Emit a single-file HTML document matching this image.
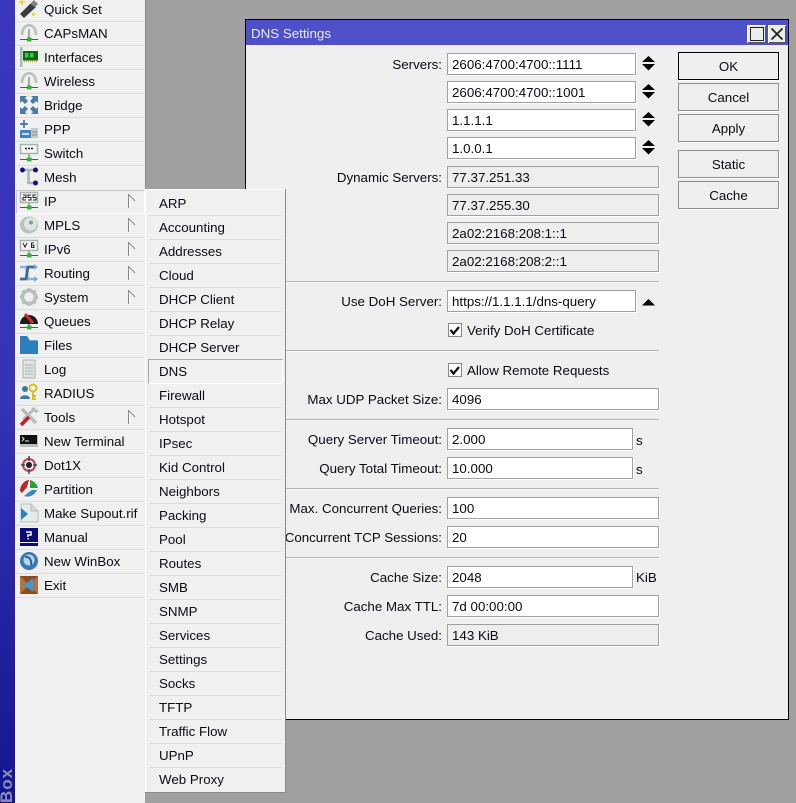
<!DOCTYPE html>
<html><head><meta charset="utf-8"><style>
html,body{margin:0;padding:0;width:796px;height:803px;overflow:hidden;background:#a0a0a0}
body{position:relative;font:13.33px/26px "Liberation Sans",Arial,sans-serif;color:#0a0a14}
div,svg,span{position:absolute}
.nw{white-space:nowrap}
.m{left:44px;height:24px;white-space:nowrap}
.s{left:159px;height:24px;white-space:nowrap}
.ln{left:15px;width:129px;height:1px;background:#dcdcdc}
.sl{left:149px;width:133px;height:1px;background:#dcdcdc}
.ic{left:19px;width:20px;height:20px}
.ar{left:128px;width:8px;height:14px}
.lb{right:354px;height:24px;white-space:nowrap}
.f{left:447px;height:20px;background:#fff;border:1px solid #a0a0a0;box-shadow:1px 1px 0 #fff;line-height:22px;padding-left:4px;box-sizing:content-box;white-space:nowrap}
.ro{background:#eeeeee}
.wl{left:247px;width:412px;height:1px;background:#b4b4b4;box-shadow:0 1px 0 #f8f8f8}
.b{left:678px;width:99px;height:26px;border:1px solid #8e8e8e;box-shadow:1px 1px 0 #fff;text-align:center;line-height:28px;background:#efefef}
.cb{left:448px;width:12px;height:12px;border:1px solid #8a8a8a;background:#fff}
</style></head><body>
<div style="left:0;top:0;width:15px;height:803px;background:linear-gradient(#3c35bd,#3533b6 50%,#14148f)"></div>
<div class="nw" style="left:-2px;top:803px;font:bold 17px/17px 'Liberation Sans',sans-serif;color:#8f8cb8;transform:rotate(-90deg);transform-origin:0 0;letter-spacing:1px">Box</div>
<div style="left:15px;top:0;width:130px;height:803px;background:#f0f0f0"></div>
<div style="left:145px;top:0;width:1px;height:189px;background:#8e8e8e"></div>

<div style="left:16px;top:190px;width:127px;height:22px;border:1px solid;border-color:#c8c8c8 #fff #fff #c8c8c8"></div>

<div class="m" style="top:-3px">Quick Set</div>
<div class="m" style="top:21px">CAPsMAN</div>
<div class="m" style="top:45px">Interfaces</div>
<div class="m" style="top:69px">Wireless</div>
<div class="m" style="top:93px">Bridge</div>
<div class="m" style="top:117px">PPP</div>
<div class="m" style="top:141px">Switch</div>
<div class="m" style="top:165px">Mesh</div>
<div class="m" style="top:189px">IP</div>
<div class="m" style="top:213px">MPLS</div>
<div class="m" style="top:237px">IPv6</div>
<div class="m" style="top:261px">Routing</div>
<div class="m" style="top:285px">System</div>
<div class="m" style="top:309px">Queues</div>
<div class="m" style="top:333px">Files</div>
<div class="m" style="top:357px">Log</div>
<div class="m" style="top:381px">RADIUS</div>
<div class="m" style="top:405px">Tools</div>
<div class="m" style="top:429px">New Terminal</div>
<div class="m" style="top:453px">Dot1X</div>
<div class="m" style="top:477px">Partition</div>
<div class="m" style="top:501px">Make Supout.rif</div>
<div class="m" style="top:525px">Manual</div>
<div class="m" style="top:549px">New WinBox</div>
<div class="m" style="top:573px">Exit</div>

<div class="ln" style="top:21px"></div><div class="ln" style="top:45px"></div><div class="ln" style="top:69px"></div><div class="ln" style="top:93px"></div><div class="ln" style="top:117px"></div><div class="ln" style="top:141px"></div><div class="ln" style="top:165px"></div><div class="ln" style="top:237px"></div><div class="ln" style="top:261px"></div><div class="ln" style="top:285px"></div><div class="ln" style="top:309px"></div><div class="ln" style="top:333px"></div><div class="ln" style="top:357px"></div><div class="ln" style="top:381px"></div><div class="ln" style="top:405px"></div><div class="ln" style="top:429px"></div><div class="ln" style="top:453px"></div><div class="ln" style="top:477px"></div><div class="ln" style="top:501px"></div><div class="ln" style="top:525px"></div><div class="ln" style="top:549px"></div><div class="ln" style="top:573px"></div><div class="ln" style="top:597px"></div>

<!-- arrows -->
<svg class="ar" style="top:194px" viewBox="0 0 8 14"><path d="M.5 .5V13.5L7 7Z" fill="#f4f4f4"/><path d="M.5 0V14M.5 .5L7 7" stroke="#8a8a8a" fill="none"/></svg>
<svg class="ar" style="top:218px" viewBox="0 0 8 14"><path d="M.5 .5V13.5L7 7Z" fill="#f4f4f4"/><path d="M.5 0V14M.5 .5L7 7" stroke="#8a8a8a" fill="none"/></svg>
<svg class="ar" style="top:242px" viewBox="0 0 8 14"><path d="M.5 .5V13.5L7 7Z" fill="#f4f4f4"/><path d="M.5 0V14M.5 .5L7 7" stroke="#8a8a8a" fill="none"/></svg>
<svg class="ar" style="top:266px" viewBox="0 0 8 14"><path d="M.5 .5V13.5L7 7Z" fill="#f4f4f4"/><path d="M.5 0V14M.5 .5L7 7" stroke="#8a8a8a" fill="none"/></svg>
<svg class="ar" style="top:290px" viewBox="0 0 8 14"><path d="M.5 .5V13.5L7 7Z" fill="#f4f4f4"/><path d="M.5 0V14M.5 .5L7 7" stroke="#8a8a8a" fill="none"/></svg>
<svg class="ar" style="top:410px" viewBox="0 0 8 14"><path d="M.5 .5V13.5L7 7Z" fill="#f4f4f4"/><path d="M.5 0V14M.5 .5L7 7" stroke="#8a8a8a" fill="none"/></svg>

<!-- icons -->
<svg class="ic" style="top:-1px" viewBox="0 0 20 20"><path d="M1 15L12 4l5 4L5 19z" fill="#3a3a3a"/><path d="M11 5l4-4 4 4-3 3z" fill="#808080"/><path d="M3 0v6M0 3h6" stroke="#e8d820" stroke-width="1.6"/><rect x="13" y="14" width="3" height="2.500" fill="#e8d820"/></svg>
<svg class="ic" style="top:23px" viewBox="0 0 20 20"><path d="M3 12C3 -1 17 -1 17 12" fill="none" stroke="#b9c5bd" stroke-width="2.800"/><path d="M10 6V15" stroke="#8a9a90" stroke-width="1.6"/><path d="M1 16.5H19" stroke="#555" stroke-width="1"/><rect x="8" y="14.5" width="4.500" height="4" fill="#2fb52f"/></svg>
<svg class="ic" style="top:47px" viewBox="0 0 20 20"><rect x="1" y="0" width="2.500" height="20" fill="#a9b9b1"/><rect x="4" y="4" width="15" height="9.500" fill="#0e6a12"/><rect x="6" y="6" width="3.500" height="4.500" fill="#4cc24c"/><rect x="11" y="6" width="3.500" height="4.500" fill="#4cc24c"/><path d="M5 14.500H19" stroke="#c8b020" stroke-width="1.6" stroke-dasharray="1 1"/></svg>
<svg class="ic" style="top:71px" viewBox="0 0 20 20"><path d="M3 12C3 -1 17 -1 17 12" fill="none" stroke="#b9c5bd" stroke-width="2.800"/><path d="M10 6V15" stroke="#8a9a90" stroke-width="1.6"/><path d="M1 16.5H19" stroke="#555" stroke-width="1"/><rect x="8" y="14.5" width="4.500" height="4" fill="#2fb52f"/></svg>
<svg class="ic" style="top:95px" viewBox="0 0 20 20" fill="#4a7aa6"><path d="M1 1H8L6 3l3 3-3 3-3-3-2 2z"/><path d="M19 1H12l2 2-3 3 3 3 3-3 2 2z"/><path d="M1 19H8L6 17l3-3-3-3-3 3-2-2z"/><path d="M19 19H12l2-2-3-3 3-3 3 3 2-2z"/></svg>
<svg class="ic" style="top:119px" viewBox="0 0 20 20"><path d="M1 5H9M5 1V9" stroke="#3f74a8" stroke-width="1.7"/><rect x="1" y="11" width="11" height="8" fill="#3a86c4"/><rect x="3" y="14" width="7" height="2" fill="#c5dff0"/><rect x="12" y="9" width="7" height="10" fill="#c4c8c6"/><path d="M13 13h5M13 16h5" stroke="#8a908c"/></svg>
<svg class="ic" style="top:143px" viewBox="0 0 20 20"><rect x="1.500" y="1.500" width="17" height="9" fill="#f4f4f4" stroke="#a8b4ac" stroke-width="1.500"/><path d="M6 5.500h2M9 5.500h2M12 5.500h2" stroke="#222" stroke-width="1.500"/><path d="M10 11V16" stroke="#8a9a90" stroke-width="1.500"/><path d="M1 16.500H19" stroke="#555"/><rect x="8" y="14.500" width="4.500" height="4" fill="#2fb52f"/></svg>
<svg class="ic" style="top:167px" viewBox="0 0 20 20"><path d="M3 3H17M9.500 3V16H17" fill="none" stroke="#a9b9b1" stroke-width="2.600"/><circle cx="3.500" cy="3" r="2.500" fill="#101080"/><circle cx="16.500" cy="3" r="2.500" fill="#101080"/><circle cx="16.500" cy="16" r="2.500" fill="#101080"/></svg>
<svg class="ic" style="top:191px" viewBox="0 0 20 20"><rect x="1.500" y="1.500" width="17" height="10" fill="#f4f4f4" stroke="#a8b4ac" stroke-width="1.500"/><path d="M4 4h3v2.500h-3v2.500h3M9 4h3H9v2.500h3v2.500h-3M14 4h3h-3v2.500h3v2.500h-3" fill="none" stroke="#222" stroke-width="1"/><path d="M10 12V16" stroke="#8a9a90" stroke-width="1.500"/><path d="M1 16.500H19" stroke="#555"/><rect x="8" y="14.500" width="4.500" height="4" fill="#2fb52f"/></svg>
<svg class="ic" style="top:215px" viewBox="0 0 20 20"><ellipse cx="10" cy="10" rx="9" ry="8.500" fill="#b7c4bc"/><circle cx="11.500" cy="9" r="6.500" fill="#dfe6e2"/><circle cx="12" cy="7.500" r="2" fill="#8a9a92"/></svg>
<svg class="ic" style="top:239px" viewBox="0 0 20 20"><rect x="1.500" y="1.500" width="17" height="10" fill="#f4f4f4" stroke="#a8b4ac" stroke-width="1.500"/><path d="M4 4l2 4 2-4M15 4h-2.500v4.500H15v-2.300h-2.500" fill="none" stroke="#222"/><path d="M10 12V16" stroke="#8a9a90" stroke-width="1.500"/><path d="M1 16.500H19" stroke="#555"/><rect x="8" y="14.500" width="4.500" height="4" fill="#2fb52f"/></svg>
<svg class="ic" style="top:263px" viewBox="0 0 20 20"><path d="M1 4H7L9 16H15" fill="none" stroke="#8fb8d8" stroke-width="2.500"/><path d="M1 16H7L9 4H15" fill="none" stroke="#3f6d9c" stroke-width="2.800"/><path d="M15 1l4 3-4 3zM15 13l4 3-4 3z" fill="#7fa8cc"/></svg>
<svg class="ic" style="top:287px" viewBox="0 0 20 20"><circle cx="10" cy="10" r="6.500" fill="none" stroke="#b4c0ba" stroke-width="3.500"/><path d="M10 1v3M10 16v3M1 10h3M16 10h3M3.500 3.500l2 2M14.500 14.500l2 2M16.500 3.500l-2 2M5.500 14.500l-2 2" stroke="#b4c0ba" stroke-width="3"/></svg>
<svg class="ic" style="top:311px" viewBox="0 0 20 20"><path d="M1 13A9 9 0 0 1 19 13Z" fill="#1c1c1c"/><path d="M6 3L14 12" stroke="#d8282c" stroke-width="3"/><path d="M10 13V16" stroke="#777" stroke-width="1.500"/><path d="M1 16.500H19" stroke="#555"/><rect x="8" y="14.500" width="4.500" height="4" fill="#2fb52f"/></svg>
<svg class="ic" style="top:335px" viewBox="0 0 20 20"><path d="M1 1H8L11 5H19V19H1Z" fill="#2c7fbc"/><path d="M8 1L11 5H19V6H10Z" fill="#6aa8d8"/></svg>
<svg class="ic" style="top:359px" viewBox="0 0 20 20"><rect x="4" y="1" width="12" height="18" fill="#dfe5e2" stroke="#a9b5af"/><path d="M6 6h8M6 9h8M6 12h8M6 15h8" stroke="#a9b5af"/></svg>
<svg class="ic" style="top:383px" viewBox="0 0 20 20"><circle cx="6" cy="6" r="3" fill="#3d78ac"/><path d="M1 16C1 11 11 11 11 16Z" fill="#3d78ac"/><circle cx="14" cy="5" r="3.500" fill="none" stroke="#d8c020" stroke-width="2"/><path d="M14 8.500V17M14 13h3M14 16h3" stroke="#d8c020" stroke-width="2"/></svg>
<svg class="ic" style="top:407px" viewBox="0 0 20 20"><path d="M3 2L17 16" stroke="#b4beb9" stroke-width="3.500"/><path d="M16 1L4 13" stroke="#b4beb9" stroke-width="3"/><path d="M10 10L2 18" stroke="#c2202a" stroke-width="3.500"/><path d="M13 1l4 4 2-2" stroke="#b4beb9" stroke-width="2" fill="none"/></svg>
<svg class="ic" style="top:431px" viewBox="0 0 20 20"><rect x="1" y="4" width="18" height="12" fill="#b9bdbb"/><rect x="1" y="4" width="17" height="9" fill="#111"/><path d="M3 6l2 2-2 2M6 10h4" stroke="#eee" fill="none"/></svg>
<svg class="ic" style="top:455px" viewBox="0 0 20 20"><circle cx="10" cy="10" r="6" fill="none" stroke="#c8404c" stroke-width="2"/><path d="M10 1V6M10 14V19M2 10H6M14 10H18" stroke="#444" stroke-width="1.500"/><circle cx="10" cy="10" r="3" fill="#222"/></svg>
<svg class="ic" style="top:479px" viewBox="0 0 20 20"><path d="M1 12C1 6 6 1 10 1L8 8 3 14Z" fill="#c0222a"/><path d="M11 1C15 2 18 5 19 9H11Z" fill="#2aa23a"/><path d="M18 11C16 16 10 19 5 17L10 13 13 11Z" fill="#3a88c8"/></svg>
<svg class="ic" style="top:503px" viewBox="0 0 20 20"><path d="M2 1H12L19 8V19H2Z" fill="#e4ebe8" stroke="#b4c0ba"/><path d="M12 1V8H19" fill="#cfd8d4" stroke="#b4c0ba"/><path d="M2 5L9 11 2 17Z" fill="#2c7fbc"/></svg>
<svg class="ic" style="top:527px" viewBox="0 0 20 20"><rect x="1" y="1" width="18" height="18" fill="#0a0a78"/><path d="M7 5h5v3H9v2" fill="none" stroke="#fff" stroke-width="1.500"/><rect x="8.500" y="11" width="1.500" height="1.500" fill="#fff"/><path d="M1 15.500H19" stroke="#f0f0f0"/></svg>
<svg class="ic" style="top:551px" viewBox="0 0 20 20"><circle cx="10" cy="10" r="9" fill="#3a78b4"/><circle cx="10" cy="9" r="5.500" fill="#b8d4ec"/><path d="M6 6C10 5 13 9 12 14" fill="none" stroke="#2c5f98" stroke-width="2"/></svg>
<svg class="ic" style="top:575px" viewBox="0 0 20 20"><rect x="1" y="1" width="18" height="18" fill="#8a4a22"/><path d="M1 1L8 8V12L1 19ZM19 1L13 6V14L19 19Z" fill="#b4723c"/><path d="M5 10L14 3V17Z" fill="#3a9ad8"/></svg>

<!-- window -->
<div style="left:245px;top:19px;width:544px;height:701px;background:#000"></div>
<div style="left:246px;top:20px;width:542px;height:699px;background:#efefef"></div>
<div style="left:246px;top:20px;width:542px;height:25px;background:#4d50c9"></div>
<div class="nw" style="left:251px;top:21px;color:#eaeaff">DNS Settings</div>
<div style="left:747px;top:25px;width:19px;height:18px;background:#ececec;box-shadow:inset 1px 1px 0 #fff,inset -1px -1px 0 #555"></div>
<div style="left:750px;top:27px;width:12px;height:12px;border:1px solid #222"></div>
<div style="left:768px;top:25px;width:18px;height:18px;background:#ececec;box-shadow:inset 1px 1px 0 #fff,inset -1px -1px 0 #555"></div>
<svg style="left:771px;top:28px;width:12px;height:12px" viewBox="0 0 12 12"><path d="M.5 .5L11.500 11.500M11.500 .5L.5 11.500" stroke="#222" stroke-width="1.800"/></svg>

<div class="lb" style="top:52px">Servers:</div>
<div class="f" style="top:53px;width:183px">2606:4700:4700::1111</div>
<div class="f" style="top:81px;width:183px">2606:4700:4700::1001</div>
<div class="f" style="top:109px;width:183px">1.1.1.1</div>
<div class="f" style="top:137px;width:183px">1.0.0.1</div>
<svg style="left:642px;top:56px;width:13px;height:15px" viewBox="0 0 13 15"><path d="M6.500 0L13 6H0ZM0 8H13L6.500 14.500Z"/></svg>
<svg style="left:642px;top:84px;width:13px;height:15px" viewBox="0 0 13 15"><path d="M6.500 0L13 6H0ZM0 8H13L6.500 14.500Z"/></svg>
<svg style="left:642px;top:112px;width:13px;height:15px" viewBox="0 0 13 15"><path d="M6.500 0L13 6H0ZM0 8H13L6.500 14.500Z"/></svg>
<svg style="left:642px;top:140px;width:13px;height:15px" viewBox="0 0 13 15"><path d="M6.500 0L13 6H0ZM0 8H13L6.500 14.500Z"/></svg>

<div class="lb" style="top:165px">Dynamic Servers:</div>
<div class="f ro" style="top:166px;width:206px">77.37.251.33</div>
<div class="f ro" style="top:194px;width:206px">77.37.255.30</div>
<div class="f ro" style="top:222px;width:206px">2a02:2168:208:1::1</div>
<div class="f ro" style="top:250px;width:206px">2a02:2168:208:2::1</div>

<div class="wl" style="top:281px"></div>
<div class="lb" style="top:289px">Use DoH Server:</div>
<div class="f" style="top:290px;width:183px">https://1.1.1.1/dns-query</div>
<svg style="left:642px;top:299px;width:13px;height:7px" viewBox="0 0 13 7"><path d="M6.500 0L13 6.500H0Z"/></svg>
<div class="cb" style="top:323px"></div>
<svg style="left:449px;top:325px;width:12px;height:11px" viewBox="0 0 12 11"><path d="M1.500 5L4.500 8.500L10 2" fill="none" stroke="#111" stroke-width="2.200"/></svg>
<div class="nw" style="left:467px;top:318px">Verify DoH Certificate</div>

<div class="wl" style="top:350px"></div>
<div class="cb" style="top:363px"></div>
<svg style="left:449px;top:365px;width:12px;height:11px" viewBox="0 0 12 11"><path d="M1.500 5L4.500 8.500L10 2" fill="none" stroke="#111" stroke-width="2.200"/></svg>
<div class="nw" style="left:467px;top:358px">Allow Remote Requests</div>
<div class="lb" style="top:387px">Max UDP Packet Size:</div>
<div class="f" style="top:388px;width:206px">4096</div>

<div class="wl" style="top:419px"></div>
<div class="lb" style="top:427px">Query Server Timeout:</div>
<div class="f" style="top:428px;width:180px">2.000</div>
<div class="nw" style="left:636px;top:428px">s</div>
<div class="lb" style="top:456px">Query Total Timeout:</div>
<div class="f" style="top:457px;width:180px">10.000</div>
<div class="nw" style="left:636px;top:457px">s</div>

<div class="wl" style="top:488px"></div>
<div class="lb" style="top:496px">Max. Concurrent Queries:</div>
<div class="f" style="top:497px;width:206px">100</div>
<div class="lb" style="top:525px">Max. Concurrent TCP Sessions:</div>
<div class="f" style="top:526px;width:206px">20</div>

<div class="wl" style="top:557px"></div>
<div class="lb" style="top:565px">Cache Size:</div>
<div class="f" style="top:566px;width:180px">2048</div>
<div class="nw" style="left:636px;top:565px">KiB</div>
<div class="lb" style="top:594px">Cache Max TTL:</div>
<div class="f" style="top:595px;width:206px">7d 00:00:00</div>
<div class="lb" style="top:623px">Cache Used:</div>
<div class="f ro" style="top:624px;width:206px">143 KiB</div>

<div class="b" style="top:52px;border-color:#000">OK</div>
<div class="b" style="top:83px">Cancel</div>
<div class="b" style="top:114px">Apply</div>
<div class="b" style="top:150px">Static</div>
<div class="b" style="top:181px">Cache</div>

<!-- submenu -->
<div style="left:145px;top:189px;width:141px;height:604px;background:#8a8a8a"></div>
<div style="left:145px;top:189px;width:139px;height:602px;background:#f0f0f0;border-top:1px solid #fff;border-left:1px solid #fff"></div>
<div style="left:148px;top:359px;width:133px;height:23px;border:1px solid;border-color:#a8a8a8 #fff #fff #a8a8a8"></div>

<div class="s" style="top:191px">ARP</div>
<div class="s" style="top:215px">Accounting</div>
<div class="s" style="top:239px">Addresses</div>
<div class="s" style="top:263px">Cloud</div>
<div class="s" style="top:287px">DHCP Client</div>
<div class="s" style="top:311px">DHCP Relay</div>
<div class="s" style="top:335px">DHCP Server</div>
<div class="s" style="top:359px">DNS</div>
<div class="s" style="top:383px">Firewall</div>
<div class="s" style="top:407px">Hotspot</div>
<div class="s" style="top:431px">IPsec</div>
<div class="s" style="top:455px">Kid Control</div>
<div class="s" style="top:479px">Neighbors</div>
<div class="s" style="top:503px">Packing</div>
<div class="s" style="top:527px">Pool</div>
<div class="s" style="top:551px">Routes</div>
<div class="s" style="top:575px">SMB</div>
<div class="s" style="top:599px">SNMP</div>
<div class="s" style="top:623px">Services</div>
<div class="s" style="top:647px">Settings</div>
<div class="s" style="top:671px">Socks</div>
<div class="s" style="top:695px">TFTP</div>
<div class="s" style="top:719px">Traffic Flow</div>
<div class="s" style="top:743px">UPnP</div>
<div class="s" style="top:767px">Web Proxy</div>

<div class="sl" style="top:215px"></div><div class="sl" style="top:239px"></div><div class="sl" style="top:263px"></div><div class="sl" style="top:287px"></div><div class="sl" style="top:311px"></div><div class="sl" style="top:335px"></div><div class="sl" style="top:407px"></div><div class="sl" style="top:431px"></div><div class="sl" style="top:455px"></div><div class="sl" style="top:479px"></div><div class="sl" style="top:503px"></div><div class="sl" style="top:527px"></div><div class="sl" style="top:551px"></div><div class="sl" style="top:575px"></div><div class="sl" style="top:599px"></div><div class="sl" style="top:623px"></div><div class="sl" style="top:647px"></div><div class="sl" style="top:671px"></div><div class="sl" style="top:695px"></div><div class="sl" style="top:719px"></div><div class="sl" style="top:743px"></div><div class="sl" style="top:767px"></div>
</body></html>
